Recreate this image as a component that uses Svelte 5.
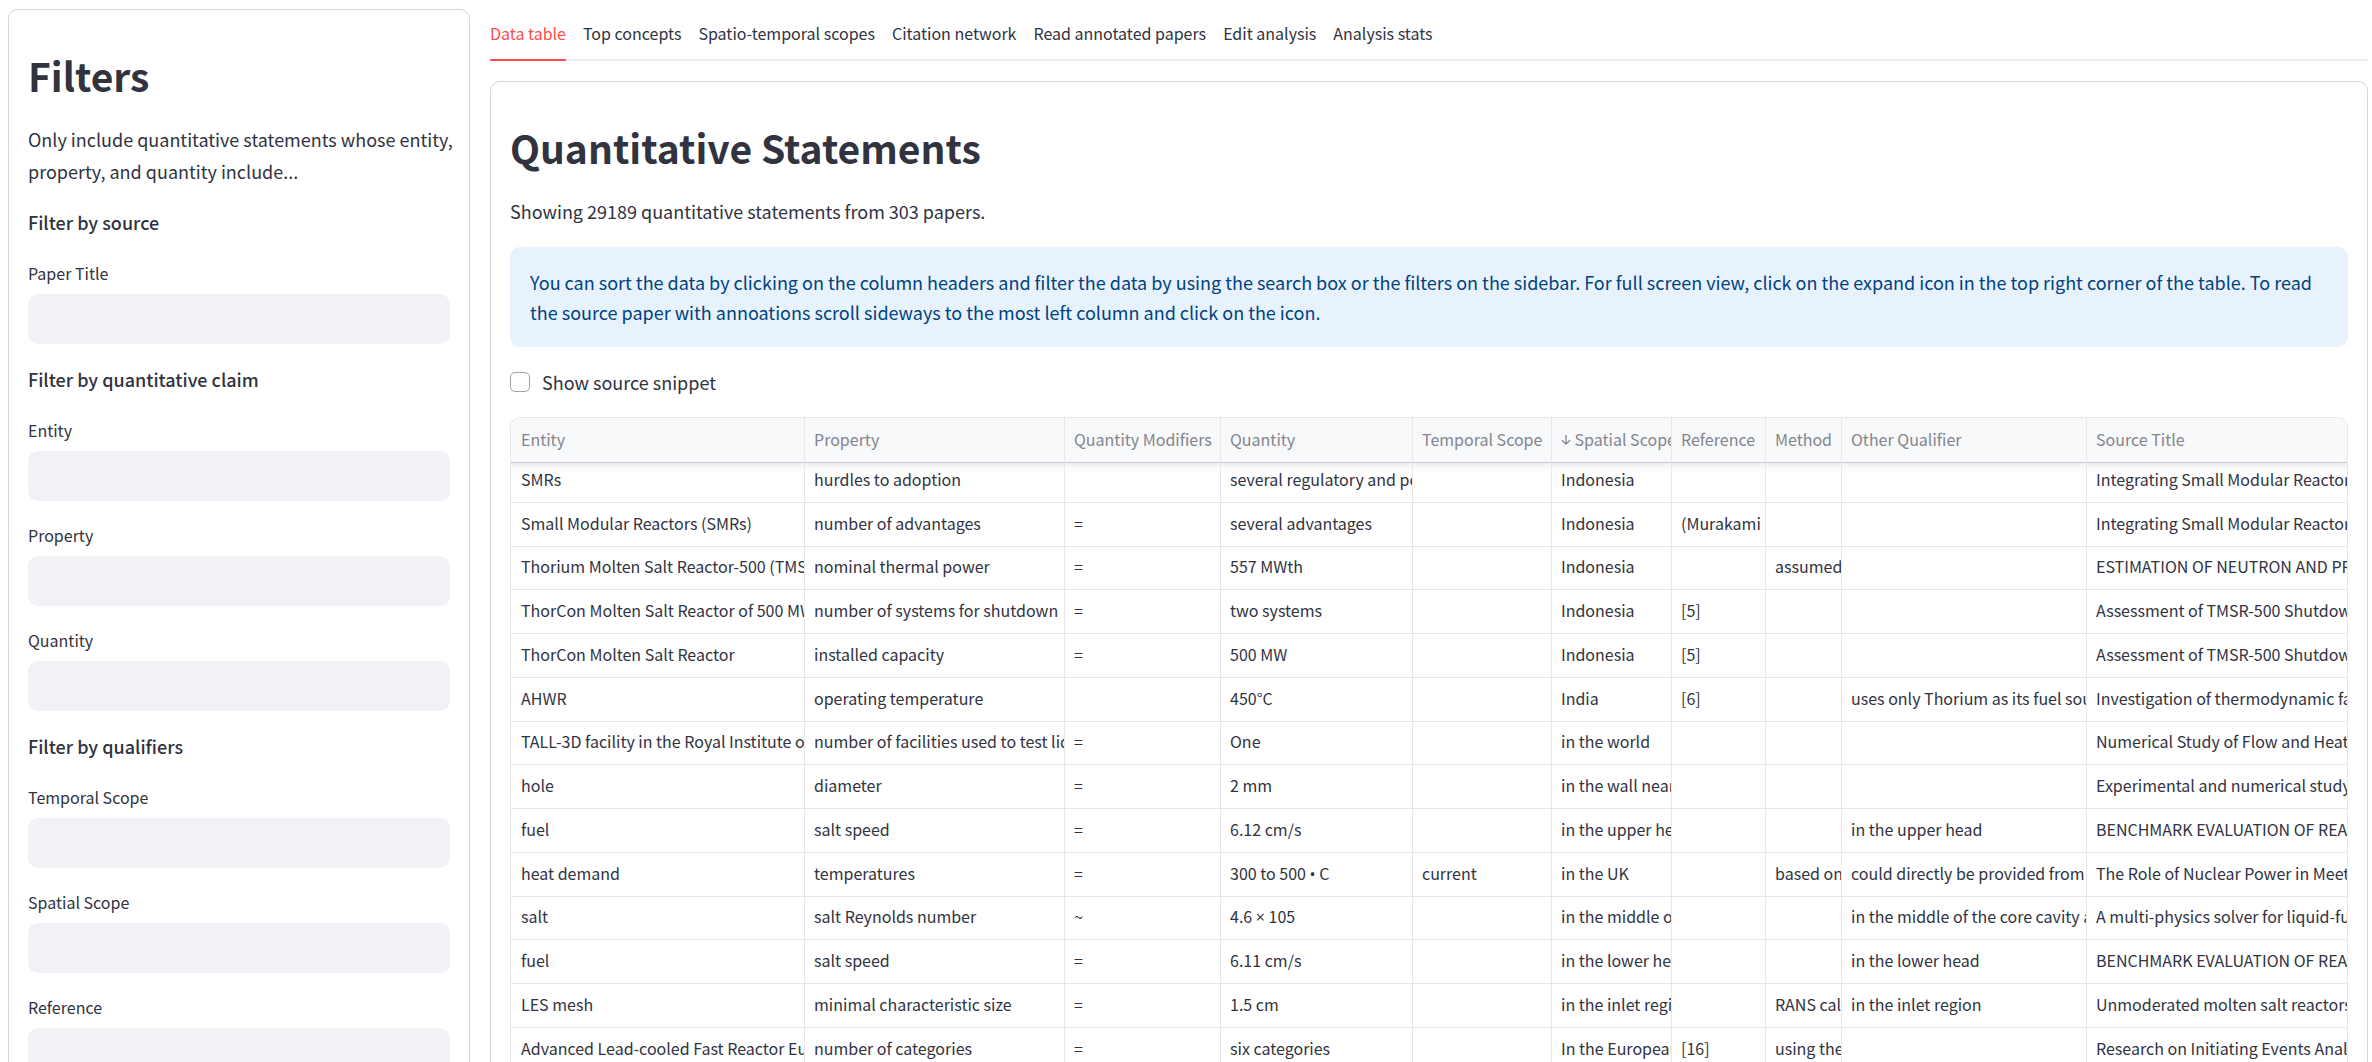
<script>
  const tabs = [
    'Data table',
    'Top concepts',
    'Spatio-temporal scopes',
    'Citation network',
    'Read annotated papers',
    'Edit analysis',
    'Analysis stats'
  ];
  let active = $state(0);
  let showSnippet = $state(false);

  const groups = [
    { title: 'Filter by source', fields: ['Paper Title'] },
    { title: 'Filter by quantitative claim', fields: ['Entity', 'Property', 'Quantity'] },
    { title: 'Filter by qualifiers', fields: ['Temporal Scope', 'Spatial Scope', 'Reference'] }
  ];

  const columns = [
    { name: 'Entity', size: 'entity' },
    { name: 'Property', size: 'property' },
    { name: 'Quantity Modifiers', size: 'modifiers' },
    { name: 'Quantity', size: 'quantity' },
    { name: 'Temporal Scope', size: 'temporal' },
    { name: 'Spatial Scope', size: 'spatial', sorted: true },
    { name: 'Reference', size: 'reference' },
    { name: 'Method', size: 'method' },
    { name: 'Other Qualifier', size: 'other' },
    { name: 'Source Title', size: 'source' }
  ];

  const rows = [
    ['SMRs', 'hurdles to adoption', '', 'several regulatory and po', '', 'Indonesia', '', '', '', 'Integrating Small Modular Reactors'],
    ['Small Modular Reactors (SMRs)', 'number of advantages', '=', 'several advantages', '', 'Indonesia', '(Murakami a', '', '', 'Integrating Small Modular Reactors'],
    ['Thorium Molten Salt Reactor-500 (TMS', 'nominal thermal power', '=', '557 MWth', '', 'Indonesia', '', 'assumed', '', 'ESTIMATION OF NEUTRON AND PR'],
    ['ThorCon Molten Salt Reactor of 500 MW', 'number of systems for shutdown', '=', 'two systems', '', 'Indonesia', '[5]', '', '', 'Assessment of TMSR-500 Shutdow'],
    ['ThorCon Molten Salt Reactor', 'installed capacity', '=', '500 MW', '', 'Indonesia', '[5]', '', '', 'Assessment of TMSR-500 Shutdow'],
    ['AHWR', 'operating temperature', '', '450°C', '', 'India', '[6]', '', 'uses only Thorium as its fuel sou', 'Investigation of thermodynamic fa'],
    ['TALL-3D facility in the Royal Institute of', 'number of facilities used to test liq', '=', 'One', '', 'in the world', '', '', '', 'Numerical Study of Flow and Heat'],
    ['hole', 'diameter', '=', '2 mm', '', 'in the wall near', '', '', '', 'Experimental and numerical study'],
    ['fuel', 'salt speed', '=', '6.12 cm/s', '', 'in the upper he', '', '', 'in the upper head', 'BENCHMARK EVALUATION OF REAC'],
    ['heat demand', 'temperatures', '=', '300 to 500 • C', 'current', 'in the UK', '', 'based on', 'could directly be provided from', 'The Role of Nuclear Power in Meeti'],
    ['salt', 'salt Reynolds number', '~', '4.6 × 105', '', 'in the middle o', '', '', 'in the middle of the core cavity a', 'A multi-physics solver for liquid-fu'],
    ['fuel', 'salt speed', '=', '6.11 cm/s', '', 'in the lower hea', '', '', 'in the lower head', 'BENCHMARK EVALUATION OF REAC'],
    ['LES mesh', 'minimal characteristic size', '=', '1.5 cm', '', 'in the inlet regi', '', 'RANS cal', 'in the inlet region', 'Unmoderated molten salt reactors'],
    ['Advanced Lead-cooled Fast Reactor Eu', 'number of categories', '=', 'six categories', '', 'In the European', '[16]', 'using the', '', 'Research on Initiating Events Analy']
  ];

  // The text face draws these two symbols full-width, so they get their own span.
  const split = (text) => text.split(/([•×])/);
</script>

<div class="page">
  <aside class="panel">
    <h1>Filters</h1>
    <p class="intro">Only include quantitative statements whose entity,<br />property, and quantity include...</p>
    {#each groups as group}
      <p class="group">{group.title}</p>
      {#each group.fields as field}
        <label class="field">
          <span>{field}</span>
          <input type="text" />
        </label>
      {/each}
    {/each}
  </aside>

  <main>
    <div class="tabs" role="tablist">
      {#each tabs as tab, i}
        <button role="tab" aria-selected={active === i} class:active={active === i} onclick={() => (active = i)}>{tab}</button>
      {/each}
    </div>

    <section class="panel">
      <h1>Quantitative Statements</h1>
      <p>Showing 29189 quantitative statements from 303 papers.</p>
      <div class="alert">
        You can sort the data by clicking on the column headers and filter the data by using the search box or the
        filters on the sidebar. For full screen view, click on the expand icon in the top right corner of the table. To
        read the source paper with annoations scroll sideways to the most left column and click on the icon.
      </div>
      <label class="check">
        <input type="checkbox" bind:checked={showSnippet} />
        <span>Show source snippet</span>
      </label>
      <div class="grid">
        <table>
          <colgroup>
            {#each columns as column}
              <col class={column.size} />
            {/each}
          </colgroup>
          <thead>
            <tr>
              {#each columns as column}
                <th scope="col" aria-sort={column.sorted ? 'descending' : undefined}>
                  <button>
                    {#if column.sorted}
                      <svg viewBox="0 0 10 12" width="10" height="12" aria-hidden="true">
                        <path d="M5 1v9M1 6.2l4 4 4-4" />
                      </svg>
                    {/if}
                    {column.name}
                  </button>
                </th>
              {/each}
            </tr>
          </thead>
          <tbody>
            {#each rows as row}
              <tr>
                {#each row as cell}
                  <td>{#each split(cell) as part, i}{#if i % 2}<span class="symbol">{part}</span>{:else}{part}{/if}{/each}</td>
                {/each}
              </tr>
            {/each}
          </tbody>
        </table>
      </div>
    </section>
  </main>
</div>

<style>
  :global(body) {
    margin: 0;
    background: #fff;
  }

  .page {
    box-sizing: border-box;
    height: 100vh;
    overflow: auto;
    scrollbar-width: none;
    display: grid;
    grid-template-columns: 462px minmax(0, 1fr);
    gap: 20px;
    align-items: start;
    padding: 9px 4px 0 8px;
    color: #31333f;
    font-family: 'Noto Sans CJK SC', 'Noto Sans', sans-serif;
    font-size: 18px;
    line-height: 32px;
  }

  .panel {
    box-sizing: border-box;
    display: flex;
    flex-direction: column;
    gap: 20px;
    padding: 19px;
    border: 1px solid #d6d6d9;
    border-radius: 10px;
  }

  h1 {
    margin: 0;
    padding: 20px 0 2px;
    font-size: 39px;
    line-height: 52px;
    font-weight: 600;
  }

  p {
    margin: 0;
  }

  .intro {
    white-space: nowrap;
  }

  .group {
    padding-bottom: 2px;
    line-height: 30px;
    font-weight: 500;
  }

  .field {
    display: flex;
    flex-direction: column;
    gap: 7px;
    font-size: 16px;
    line-height: 28px;
  }

  .field input {
    box-sizing: border-box;
    width: 100%;
    height: 50px;
    padding: 0 15px;
    border: 0;
    border-radius: 10px;
    background: #f0f2f6;
    color: inherit;
    font: inherit;
  }

  main {
    display: flex;
    flex-direction: column;
    gap: 20px;
  }

  .tabs {
    display: flex;
    gap: 17px;
    box-shadow: inset 0 -2px #eaebec;
  }

  button {
    border: 0;
    padding: 0;
    background: none;
    color: inherit;
    font: inherit;
    cursor: pointer;
  }

  .tabs button {
    height: 52px;
    padding-bottom: 2px;
    border-bottom: 2px solid transparent;
    font-size: 16px;
    line-height: 48px;
    white-space: nowrap;
  }

  .tabs button.active {
    color: #ff4b4b;
    border-color: #ff4b4b;
  }

  .alert {
    padding: 20px;
    border-radius: 10px;
    background: #e8f2fc;
    color: #004280;
    line-height: 30px;
  }

  .check {
    display: flex;
    align-items: center;
    align-self: flex-start;
    gap: 12px;
    line-height: 30px;
  }

  .check input {
    appearance: none;
    box-sizing: border-box;
    width: 20px;
    height: 20px;
    margin: 0;
    border: 1px solid #a3a4aa;
    border-radius: 5px;
    background: #fff;
  }

  .check input:checked {
    background: #ff4b4b;
    border-color: #ff4b4b;
  }

  .grid {
    overflow: hidden;
    border: 1px solid #e6e7e9;
    border-radius: 10px;
  }

  table {
    width: 100%;
    table-layout: fixed;
    border-collapse: separate;
    border-spacing: 0;
    font-size: 16px;
    line-height: 24px;
  }

  .entity { width: 294px; }
  .property { width: 260px; }
  .modifiers { width: 156px; }
  .quantity { width: 192px; }
  .temporal { width: 139px; }
  .spatial { width: 120px; }
  .reference { width: 94px; }
  .method { width: 76px; }
  .other { width: 245px; }

  th,
  td {
    box-sizing: border-box;
    padding: 0 0 2px 9px;
    border-right: 1px solid #e8e8ea;
    border-bottom: 1px solid #e8e8ea;
    overflow: hidden;
    white-space: nowrap;
    text-align: left;
    font-weight: 400;
  }

  th:first-child,
  td:first-child {
    padding-left: 10px;
  }

  th:last-child,
  td:last-child {
    border-right: 0;
  }

  thead tr {
    height: 45px;
  }

  th {
    background: #f8f9fb;
    border-bottom-color: #cbccd0;
    color: #83858c;
  }

  th svg {
    fill: none;
    stroke: currentColor;
    stroke-width: 1.3;
  }

  td {
    padding-bottom: 4px;
  }

  tbody tr {
    height: 44px;
  }

  tbody tr:nth-child(4n + 3) {
    height: 43px;
  }

  tbody tr:first-child {
    height: 40px;
    background: linear-gradient(#ebebed, #f8f8f9 4px, #fff 10px);
  }

  tbody tr:first-child td {
    padding-bottom: 8px;
  }

  .symbol {
    font-family: 'Open Sans', sans-serif;
    font-size: 16px;
    line-height: 16px;
  }
</style>
